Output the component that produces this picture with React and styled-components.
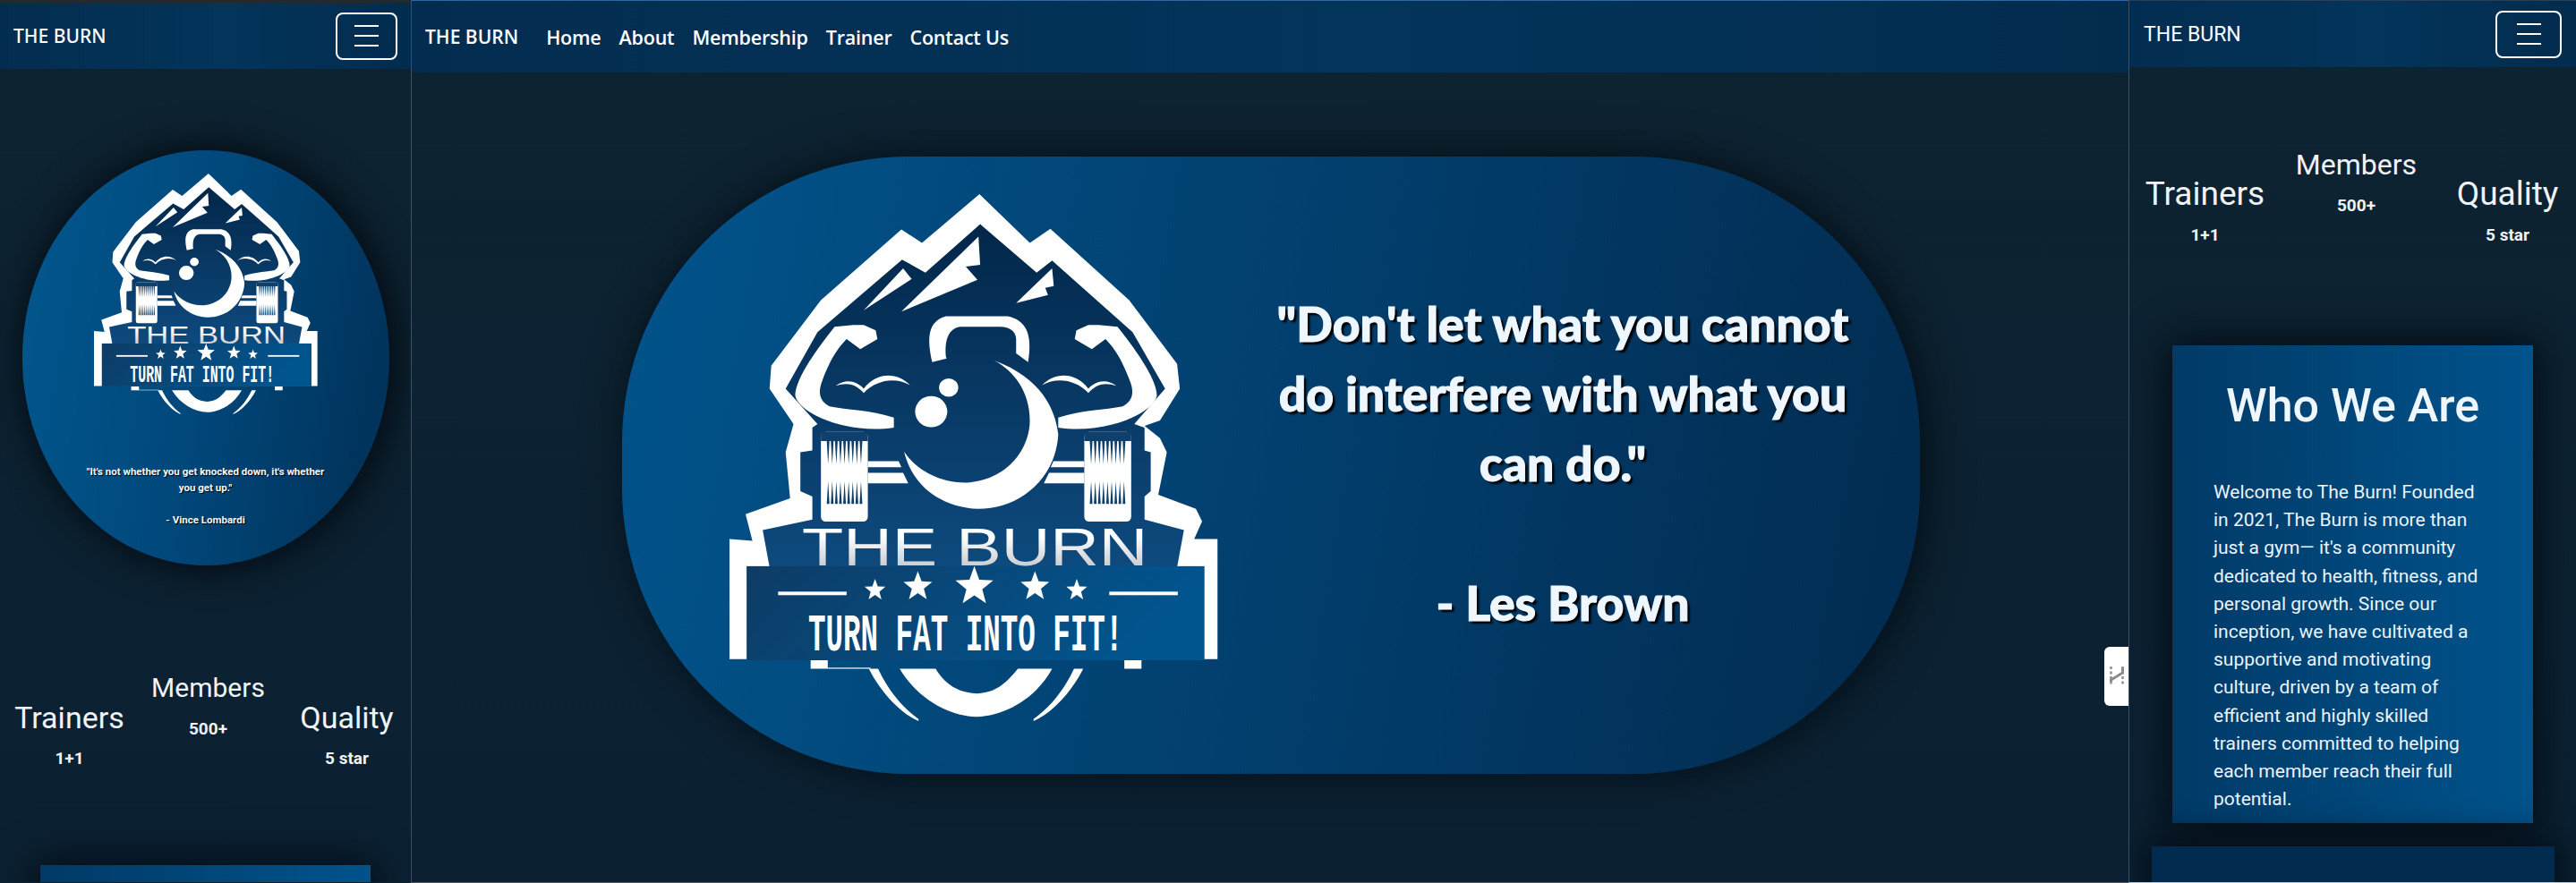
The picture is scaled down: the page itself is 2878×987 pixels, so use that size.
import styled, { createGlobalStyle } from 'styled-components'

const GlobalStyle = createGlobalStyle`
    html, body {
        margin: 0;
        padding: 0;
        background: #0d2231;
    }
    * {
        box-sizing: border-box;
    }
`

const star = (cx, cy, r) => {
    const pts = []
    for (let i = 0; i < 10; i++) {
        const rad = i % 2 === 0 ? r : r * 0.42
        const a = -Math.PI / 2 + (i * Math.PI) / 5
        pts.push(`${(cx + rad * Math.cos(a)).toFixed(1)},${(cy + rad * Math.sin(a)).toFixed(1)}`)
    }
    return pts.join(' ')
}

// the teeth on the weight plates
const spikes = [0, 1, 2, 3, 4, 5, 6, 7, 8]

const halfLogo = (
    <>
        {/* arm */}
        <path fill="#fff" d="M450 410 L395 415 C350 470 280 560 280 610 C290 660 430 720 568 700 L568 672 C500 650 430 650 380 640 C350 625 345 600 360 565 C385 500 410 470 430 450 L470 478 L520 450 L515 425 L480 410 Z" />
        <path fill="#fff" d="M398 582 C430 560 460 570 480 590 C520 540 580 545 615 580 C575 558 520 562 480 602 C455 575 430 572 398 582 Z" />
        {/* plate */}
        <rect x="355" y="712" width="137" height="254" rx="14" fill="#fff" />
        <path fill="#0f3f6b" d="M355 712 H492 V738 H355 Z" />
        {spikes.map((i) => (
            <path
                key={i}
                fill="#0f3f6b"
                d={`M${372 + i * 12} 738 h8 l-4 66 Z M${372 + i * 12} 916 h8 l-4 -64 Z`}
            />
        ))}
        {/* bar */}
        <path fill="#fff" d="M492 795 L582 795 L590 812 L492 812 Z M492 828 L595 828 L610 858 L492 858 Z" />
        {/* bottom */}
        <rect x="325" y="1356" width="50" height="26" fill="#fff" />
        <path fill="#fff" d="M495 1382 C530 1450 590 1510 640 1530 L640 1524 C590 1490 550 1440 522 1382 Z" />
    </>
)

const Logo = ({ id, width, height, lift }) => (
    <LogoSvg
        viewBox="88 40 1427 1490"
        preserveAspectRatio="none"
        $width={width}
        $height={height}
        $lift={lift}
    >
        <defs>
            <linearGradient id={`${id}-inner`} x1="0" y1="0" x2="0" y2="1">
                <stop offset="0" stopColor="#02274a" />
                <stop offset="1" stopColor="#0e4a7e" />
            </linearGradient>
            <linearGradient id={`${id}-banner`} x1="0" y1="0" x2="1" y2="0.2">
                <stop offset="0" stopColor="#0e3c66" />
                <stop offset="1" stopColor="#01558f" />
            </linearGradient>
            <linearGradient id={`${id}-name`} x1="0" y1="0" x2="0" y2="1">
                <stop offset="0.3" stopColor="#ffffff" />
                <stop offset="1" stopColor="#b9bcc0" />
            </linearGradient>
        </defs>
        <path fill="#fff" d="M818 40 L965 178 L1025 138 L1255 340 L1395 520 L1403 590 L1345 680 L1300 695 L1345 730 L1365 770 L1340 890 L1450 930 L1468 965 L1445 1015 L1513 1015 L1513 1355 L88 1355 L88 1015 L155 1020 L135 945 L265 900 L252 770 L275 690 L205 590 L210 525 L355 340 L590 140 L650 178 Z" />
        <path fill={`url(#${id}-inner)`} d="M820 125 L985 262 L1030 228 L1265 430 L1360 590 L1270 690 L1300 700 L1300 765 L1318 770 L1318 880 L1300 895 L1300 960 L1415 990 L1395 1095 L205 1095 L185 990 L330 960 L330 895 L295 880 L295 770 L330 765 L330 700 L345 690 L252 590 L345 430 L592 225 L660 262 Z" />
        {halfLogo}
        <g transform="translate(1616 0) scale(-1 1)">{halfLogo}</g>
        {/* peaks */}
        <path fill="#fff" d="M815 160 L820 240 L778 245 L812 282 L590 372 Z M595 250 L620 280 L480 368 Z M1030 250 L1035 300 L1010 305 L1018 325 L925 348 Z" />
        {/* kettlebell */}
        <path fill="#fff" d="M680 515 C665 450 665 400 720 385 L900 385 C950 395 975 430 960 515 L925 490 L925 450 C925 425 900 415 880 415 L760 415 C735 420 715 440 720 500 L722 505 Z" />
        <path fill="#fff" d="M860 510 C1000 560 1040 650 1048 720 C1040 850 930 930 815 930 C700 925 620 860 598 768 C640 830 720 860 790 855 C900 845 965 760 965 680 C965 600 920 540 860 510 Z" />
        <ellipse cx="677" cy="655" rx="47" ry="44" fill="#fff" />
        <ellipse cx="728" cy="587" rx="28" ry="26" fill="#fff" />
        {/* ring under the banner */}
        <path fill="#fff" d="M585 1382 C640 1470 730 1515 810 1518 C890 1515 980 1470 1030 1382 L930 1382 C890 1430 860 1450 810 1452 C760 1450 720 1430 690 1382 Z" />
        {/* banner */}
        <rect x="138" y="1092" width="1337" height="266" fill={`url(#${id}-banner)`} />
        <rect x="375" y="1379" width="125" height="3" fill="#fff" />
        <text transform="translate(300 1090) scale(1.317 1)" fontFamily="'Liberation Sans', sans-serif" fontSize="150" fill={`url(#${id}-name)`}>THE BURN</text>
        <polygon fill="#fff" points={star(513, 1160, 32)} />
        <polygon fill="#fff" points={star(638, 1150, 44)} />
        <polygon fill="#fff" points={star(803, 1150, 58)} />
        <polygon fill="#fff" points={star(980, 1150, 44)} />
        <polygon fill="#fff" points={star(1102, 1160, 32)} />
        <rect x="230" y="1164" width="200" height="10" fill="#fff" />
        <rect x="1197" y="1164" width="200" height="10" fill="#fff" />
        <text transform="translate(318 1330) scale(0.567 1)" fontFamily="'Liberation Mono', monospace" fontWeight="700" fontSize="150" fill="#fff">TURN FAT INTO FIT!</text>
    </LogoSvg>
)

const Header = ({ family, size, weight, height, pad, links, toggler }) => (
    <TopBar $height={height} $pad={pad} $family={family}>
        <Brand $size={size} $weight={weight}>THE BURN</Brand>
        {links && (
            <NavLinks>
                {links.map((item) => <NavLink key={item}>{item}</NavLink>)}
            </NavLinks>
        )}
        {toggler && (
            <Toggler $width={toggler.width} $height={toggler.height}>
                <TogglerBar />
                <TogglerBar />
                <TogglerBar />
            </Toggler>
        )}
    </TopBar>
)

const Stats = ({ column, top, size, midSize }) => (
    <StatRow $column={column} $top={top}>
        {[
            ['Trainers', '1+1', true, size],
            ['Members', '500+', false, midSize],
            ['Quality', '5 star', true, size],
        ].map(([title, value, lowered, titleSize]) => (
            <Stat key={title} $lowered={lowered}>
                <StatTitle $size={titleSize}>{title}</StatTitle>
                <StatValue>{value}</StatValue>
            </Stat>
        ))}
    </StatRow>
)

const App = () => {
    return (
        <Page>
            <GlobalStyle />

            <Panel $width={459} $topLine="#26292c" $topSize={3} $bottomLine="#0d2231">
                <Header family="'Noto Sans', sans-serif" size={21} weight={500} height={74} pad={15} toggler={{ width: 69, height: 53 }} />
                <SmallOval>
                    <Logo id="small" width={250} height={269} />
                    <SmallQuote>
                        "It's not whether you get knocked down, it's whether you get up."
                        <br /><br />
                        - Vince Lombardi
                    </SmallQuote>
                </SmallOval>
                <Stats column={155} top={117} size={34} midSize={30} />
                <Card $width={369} $top={107} $height={120} />
            </Panel>

            <Panel $width={1919} $topLine="#2f66a4" $topSize={1} $divider $bottomLine="#55585a">
                <Header
                    family="'Open Sans', sans-serif"
                    size={21}
                    weight={600}
                    height={80}
                    pad={15}
                    links={['Home', 'About', 'Membership', 'Trainer', 'Contact Us']}
                />
                <BigOval>
                    <Logo id="big" width={546} height={589} lift={18} />
                    <BigQuote>
                        "Don't let what you cannot do interfere with what you can do."
                        <br /><br />
                        - Les Brown
                    </BigQuote>
                </BigOval>
                <ExtensionTab>
                    <svg width="16" height="24" viewBox="0 0 16 24" fill="none" stroke="#8b8b8b" strokeWidth="2.4">
                        <path d="M1.5 1 V23" strokeDasharray="3 2.5" />
                        <path d="M14.5 1 V23" strokeDasharray="3 2.5" />
                        <path d="M1.5 18 L1.5 16 L14.5 8 L14.5 2" strokeWidth="3" />
                    </svg>
                </ExtensionTab>
            </Panel>

            <Panel $width={500} $topLine="#2b3f52" $topSize={1} $divider $bottomLine="#b9c8d6">
                <Header family="'Roboto', sans-serif" size={23} weight={400} height={74} pad={16} toggler={{ width: 74, height: 53 }} />
                <Stats column={169} top={89} size={37} midSize={32} />
                <Card $width={403} $top={111} $height={534}>
                    <CardTitle>Who We Are</CardTitle>
                    <CardText>
                        Welcome to The Burn! Founded in 2021, The Burn is more than just a gym— it's a community dedicated to health, fitness, and personal growth. Since our inception, we have cultivated a supportive and motivating culture, driven by a team of efficient and highly skilled trainers committed to helping each member reach their full potential.
                    </CardText>
                </Card>
                <NextCard />
            </Panel>
        </Page>
    )
}

const Page = styled.div`
    display: flex;
    width: 2878px;
    height: 987px;
    overflow: hidden;
    background: #0d2231;
    font-family: 'Roboto', sans-serif;
`

const Panel = styled.section`
    position: relative;
    flex: none;
    display: flex;
    flex-direction: column;
    width: ${(p) => p.$width}px;
    height: 987px;
    overflow: hidden;
    border-top: ${(p) => p.$topSize}px solid ${(p) => p.$topLine};
    border-left: ${(p) => (p.$divider ? '1px solid #3b5061' : 'none')};
    border-bottom: 1px solid ${(p) => p.$bottomLine};
    background: linear-gradient(180deg, #0e2331, #0b2133);
`

const TopBar = styled.header`
    flex: none;
    display: flex;
    align-items: center;
    height: ${(p) => p.$height}px;
    padding: 0 ${(p) => p.$pad}px;
    background: linear-gradient(90deg, #032d50, #03345a 55%, #022c4e);
    color: #fff;
    font-family: ${(p) => p.$family};
`

const Brand = styled.div`
    font-size: ${(p) => p.$size}px;
    font-weight: ${(p) => p.$weight};
`

const NavLinks = styled.nav`
    display: flex;
    gap: 20px;
    margin-left: 31px;
`

const NavLink = styled.a`
    font-size: 21.5px;
    font-weight: 600;
    letter-spacing: -0.2px;
`

const Toggler = styled.button`
    display: flex;
    flex-direction: column;
    align-items: center;
    justify-content: center;
    gap: 9px;
    width: ${(p) => p.$width}px;
    height: ${(p) => p.$height}px;
    margin-left: auto;
    padding: 0;
    background: transparent;
    border: 2px solid #fff;
    border-radius: 8px;
`

const TogglerBar = styled.span`
    display: block;
    width: 27px;
    height: 2px;
    background: #fff;
`

const LogoSvg = styled.svg`
    flex: none;
    display: block;
    width: ${(p) => p.$width}px;
    height: ${(p) => p.$height}px;
    margin-bottom: ${(p) => p.$lift || 0}px;
`

const SmallOval = styled.div`
    flex: none;
    display: flex;
    flex-direction: column;
    align-items: center;
    width: 410px;
    height: 464px;
    margin: 91px auto 0;
    padding-top: 26px;
    border-radius: 50%;
    background: linear-gradient(100deg, #01588f, #01477a 50%, #012f55);
    box-shadow: 4px 0 40px 6px rgba(2, 8, 14, 0.85);
`

const SmallQuote = styled.p`
    width: 272px;
    margin: 55px 0 0;
    color: #f4f8fb;
    font-size: 11.5px;
    font-weight: 700;
    line-height: 18px;
    text-align: center;
    text-shadow: 1px 1px 1px #000;
`

const BigOval = styled.div`
    flex: none;
    display: flex;
    align-items: center;
    width: 1450px;
    height: 690px;
    margin: 94px 0 0 235px;
    padding-left: 120px;
    border-radius: 320px;
    background: linear-gradient(100deg, #01548c, #023b68 60%, #022b4f);
    box-shadow: 6px 0 45px 4px rgba(2, 8, 14, 0.7);
`

const BigQuote = styled.p`
    width: 670px;
    margin: 0 0 6px 50px;
    color: #eef6ff;
    font-family: 'Lato', sans-serif;
    font-size: 53.5px;
    font-weight: 900;
    line-height: 78px;
    text-align: center;
    text-shadow: 3px 3px 2px #000;
    -webkit-text-stroke: 1px #eef6ff;
`

const ExtensionTab = styled.div`
    position: absolute;
    top: 722px;
    right: 0;
    display: flex;
    align-items: center;
    justify-content: center;
    width: 27px;
    height: 66px;
    background: #fff;
    border-radius: 6px 0 0 6px;
`

const StatRow = styled.div`
    flex: none;
    display: grid;
    grid-template-columns: repeat(3, ${(p) => p.$column}px);
    margin-top: ${(p) => p.$top}px;
`

const Stat = styled.div`
    margin-top: ${(p) => (p.$lowered ? 33 : 0)}px;
    text-align: center;
    color: #f0f4f8;
`

const StatTitle = styled.div`
    font-size: ${(p) => p.$size}px;
    line-height: 40px;
`

const StatValue = styled.div`
    margin-top: 14px;
    font-size: 19px;
    font-weight: 700;
    line-height: 24px;
`

const Card = styled.article`
    flex: none;
    width: ${(p) => p.$width}px;
    height: ${(p) => p.$height}px;
    margin: ${(p) => p.$top}px auto 0;
    padding: 0 46px;
    background: linear-gradient(90deg, #013a67, #00538c);
    box-shadow: 0 0 40px 6px rgba(2, 8, 14, 0.8);
    color: #eaf4fb;
`

const CardTitle = styled.h2`
    margin: 35px -20px 0;
    color: #eff7fe;
    font-size: 52px;
    font-weight: 500;
    line-height: 66px;
    text-align: center;
    white-space: nowrap;
`

const CardText = styled.p`
    width: 300px;
    margin: 48px 0 0;
    font-size: 21px;
    line-height: 31.2px;
`

const NextCard = styled.div`
    flex: none;
    width: 450px;
    height: 60px;
    margin: 26px auto 0;
    background: #012b4e;
    box-shadow: 0 0 40px 6px rgba(2, 8, 14, 0.8);
`

export default App
